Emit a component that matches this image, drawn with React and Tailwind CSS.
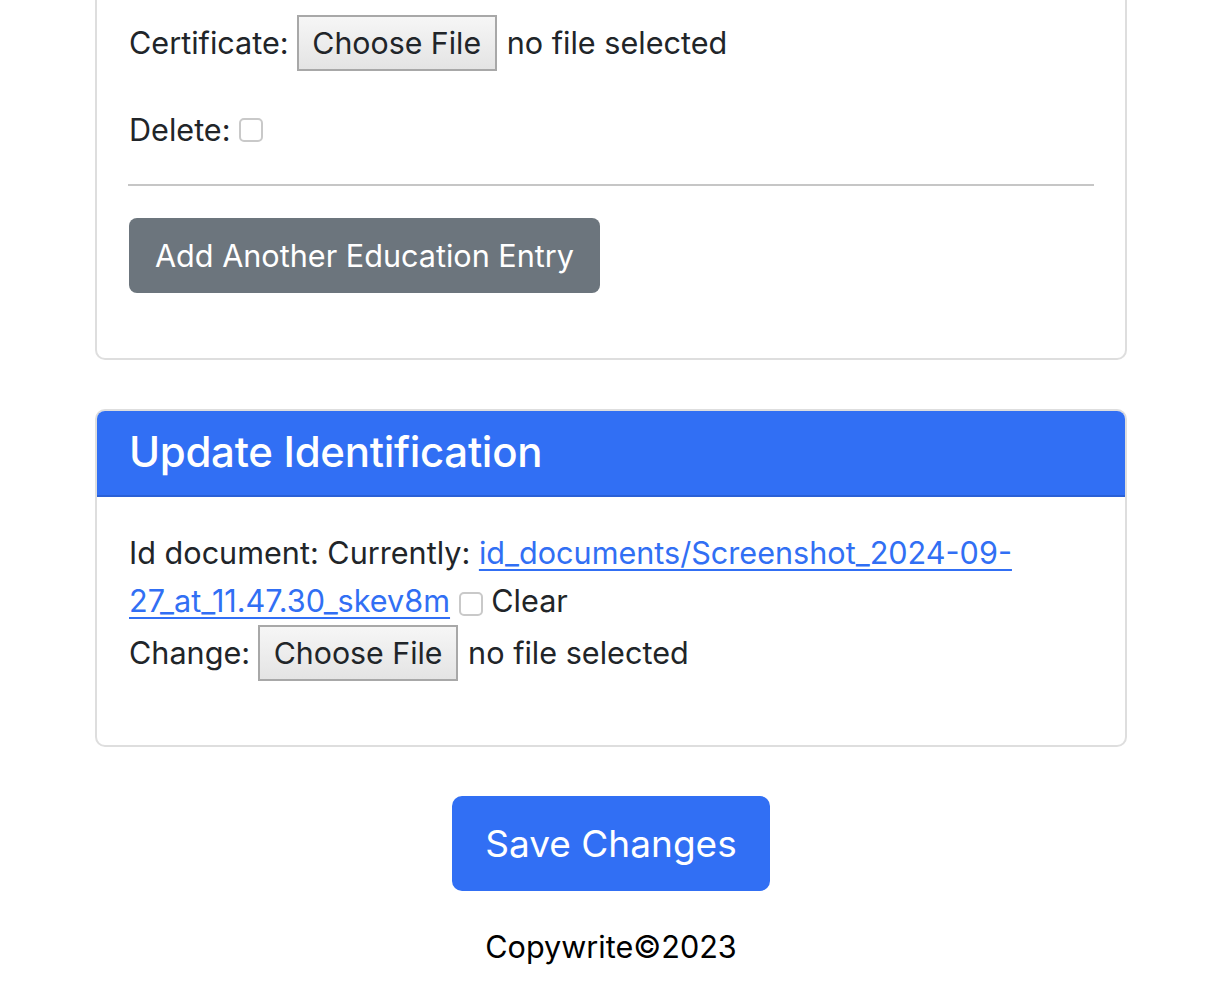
import React from 'react';

const font = { fontFamily: 'Inter, "Noto Sans", sans-serif' };

const FileButton = () => (
  <span className="inline-flex items-center justify-center h-[56px] w-[200px] border-2 border-[#a8a8a8] bg-gradient-to-b from-[#f6f6f6] to-[#e4e4e4] text-[#212529] text-[30.3px] leading-none">
    Choose File
  </span>
);

const Box = () => (
  <span className="inline-block w-[24px] h-[24px] rounded-[5px] border-2 border-[#c9c9c9] bg-white align-middle" />
);

export default function App() {
  return (
    <div className="min-h-screen bg-white text-[#212529]" style={font}>
      <div className="w-[1032px] mx-auto">
        {/* education card (top cut off) */}
        <div className="border-2 border-t-0 border-[#dedede] rounded-b-[10px] px-[32px] pt-[14px] pb-[65px]">
          <div className="flex items-center h-[58px] text-[30.6px]">
            <span>Certificate:</span>
            <span className="ml-[8px]"><FileButton /></span>
            <span className="ml-[10px]">no file selected</span>
          </div>
          <div className="flex items-center h-[48px] mt-[34px] text-[30.6px]">
            <span>Delete:</span>
            <span className="ml-[8px] flex"><Box /></span>
          </div>
          <div className="h-[2px] bg-[#c6c6c6] mt-[30px] mx-[-1px] w-[966px]" />
          <div className="mt-[32px]">
            <button className="h-[75px] px-[26px] rounded-[8px] bg-[#6c757d] text-white text-[30.6px]">
              Add Another Education Entry
            </button>
          </div>
        </div>

        {/* identification card */}
        <div className="mt-[49px] border-2 border-[#dedede] rounded-[10px] overflow-hidden">
          <div className="h-[86px] bg-[#316ff4] border-b-2 border-[#2a60d6] flex items-center px-[32px] pb-[3px]">
            <h3 className="text-white text-[42px] font-medium tracking-[-0.3px]">Update Identification</h3>
          </div>
          <div className="px-[32px] pt-[32px] pb-[64px] text-[30.6px]">
            <div className="leading-[48px]">
              Id document: Currently:{' '}
              <a href="#" className="text-[#316ff4] underline underline-offset-[5px] decoration-2">
                id_documents/Screenshot_2024-09-
                <br />
                27_at_11.47.30_skev8m
              </a>{' '}
              <Box /> Clear
            </div>
            <div className="flex items-center h-[56px]">
              <span>Change:</span>
              <span className="ml-[8px]"><FileButton /></span>
              <span className="ml-[10px]">no file selected</span>
            </div>
          </div>
        </div>

        {/* actions */}
        <div className="flex justify-center mt-[49px]">
          <button className="h-[95px] w-[318px] rounded-[10px] bg-[#316ff4] text-white text-[37px]">
            Save Changes
          </button>
        </div>
        <p className="text-center text-black text-[30.6px] mt-[33px]">Copywrite©2023</p>
      </div>
    </div>
  );
}
